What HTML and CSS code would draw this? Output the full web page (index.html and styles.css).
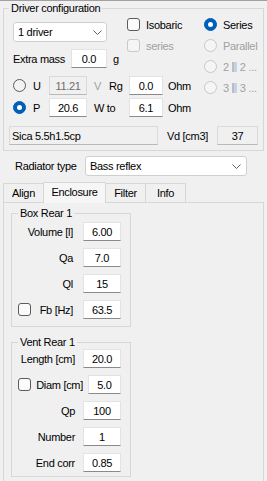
FILE: index.html
```html
<!DOCTYPE html>
<html lang="en">
    <head>
        <meta charset="UTF-8" />
        <meta name="viewport" content="width=device-width, initial-scale=1.0" />
        <title>Driver</title>
        <link rel="stylesheet" href="styles.css">
    </head>
    <body>
        <fieldset class="group driver">
            <legend>Driver configuration</legend>
            <div class="cfg">
                <div class="main">
                    <div class="row1">
                        <div class="left-col">
                            <div class="select drivers">
                                <span>1 driver</span>
                                <svg width="9" height="5" viewBox="0 0 9 5"><path d="M0.5 0.5L4.5 4.5L8.5 0.5" fill="none" stroke="#606060"/></svg>
                            </div>
                            <div class="mass">
                                <span class="mass-label">Extra mass</span>
                                <div class="box mass-box">0.0</div>
                                <span class="unit">g</span>
                            </div>
                        </div>
                        <div class="checks">
                            <div class="check"><span class="cb"></span>Isobaric</div>
                            <div class="check disabled"><span class="cb"></span>series</div>
                        </div>
                    </div>
                    <div class="power">
                        <span class="rb"></span>
                        <span>U</span>
                        <div class="box readonly">11.21</div>
                        <span class="mid"><span class="volt">V</span>Rg</span>
                        <div class="box box-sm">0.0</div>
                        <span class="ohm">Ohm</span>

                        <span class="rb on"></span>
                        <span>P</span>
                        <div class="box">20.6</div>
                        <span class="mid">W to</span>
                        <div class="box box-sm">6.1</div>
                        <span class="ohm">Ohm</span>
                    </div>
                </div>
                <div class="radios">
                    <div class="option"><span class="rb on"></span><span>Series</span></div>
                    <div class="option disabled"><span class="rb"></span><span>Parallel</span></div>
                    <div class="option disabled"><span class="rb"></span><span class="combo">2<svg class="par" width="5" height="10" viewBox="0 0 5 10"><rect x="0" y="0" width="2" height="10" fill="#bdbdbd"/><rect x="2" y="0" width="3" height="10" fill="#c3d2ea"/></svg>2 ...</span></div>
                    <div class="option disabled"><span class="rb"></span><span class="combo">3<svg class="par" width="5" height="10" viewBox="0 0 5 10"><rect x="0" y="0" width="2" height="10" fill="#bdbdbd"/><rect x="2" y="0" width="3" height="10" fill="#c3d2ea"/></svg>3 ...</span></div>
                </div>
            </div>
            <div class="sica">
                <div class="box readonly name">Sica 5.5h1.5cp</div>
                <span class="vd">Vd [cm3]</span>
                <div class="box readonly vd-box">37</div>
            </div>
        </fieldset>

        <div class="radiator">
            <span class="radiator-label">Radiator type</span>
            <div class="select bass">
                <span>Bass reflex</span>
                <svg width="9" height="5" viewBox="0 0 9 5"><path d="M0.5 0.5L4.5 4.5L8.5 0.5" fill="none" stroke="#606060"/></svg>
            </div>
        </div>

        <div class="tabs">
            <div class="tab">Align</div>
            <div class="tab active">Enclosure</div>
            <div class="tab">Filter</div>
            <div class="tab">Info</div>
        </div>

        <div class="panel">
            <fieldset class="group box-rear">
                <legend>Box Rear 1</legend>
                <div class="fields">
                    <div class="field"><span class="lbl">Volume [l]</span><div class="box">6.00</div></div>
                    <div class="field"><span class="lbl">Qa</span><div class="box">7.0</div></div>
                    <div class="field"><span class="lbl">Ql</span><div class="box">15</div></div>
                    <div class="field"><span class="lbl"><span class="cb"></span>Fb [Hz]</span><div class="box">63.5</div></div>
                </div>
            </fieldset>

            <fieldset class="group vent">
                <legend>Vent Rear 1</legend>
                <div class="fields">
                    <div class="field"><span class="lbl">Length [cm]</span><div class="box">20.0</div></div>
                    <div class="field diam"><span class="lbl"><span class="cb"></span>Diam [cm]</span><div class="box">5.0</div></div>
                    <div class="field"><span class="lbl">Qp</span><div class="box">100</div></div>
                    <div class="field"><span class="lbl">Number</span><div class="box">1</div></div>
                    <div class="field"><span class="lbl">End corr</span><div class="box">0.85</div></div>
                </div>
            </fieldset>
        </div>
    </body>
</html>
```

FILE: styles.css
```css
:root {
  --bg: #f0f0f0;
  --line: #d7d7d7;
  --muted: #a0a0a0;
  --accent: #005fb8;
  --font: 'Liberation Sans', Arial, sans-serif;
}

* {
  box-sizing: border-box;
  margin: 0;
  padding: 0;
}

body {
  background: var(--bg);
  font-family: var(--font);
  font-size: 11px;
  line-height: 14px;
  letter-spacing: -0.3px;
  color: #000;
  width: 267px;
  height: 481px;
  overflow: hidden;
  border-top: 1px solid #a0a0a0;
}

fieldset.group {
  border: 1px solid var(--line);
  min-width: 0;
}

legend {
  padding: 0 2px;
}

/* driver configuration */

.driver {
  margin: 0 3px;
  width: 261px;
  padding: 3px 5px 5px;
}

.cfg {
  display: flex;
}

.main {
  width: 195px;
  flex: none;
  padding-left: 4px;
}

.row1 {
  display: flex;
}

.left-col {
  width: 114px;
}

.select {
  display: flex;
  align-items: center;
  justify-content: space-between;
  height: 20px;
  background: #fff;
  border: 1px solid #cfcfcf;
  border-radius: 3px;
  padding: 0 4px;
}

.drivers {
  width: 94px;
  margin-top: 4px;
}

.mass {
  display: flex;
  align-items: center;
  height: 19px;
  margin-top: 7px;
}

.mass-label {
  width: 58px;
}

.box {
  display: flex;
  align-items: center;
  justify-content: center;
  width: 38px;
  height: 19px;
  background: #fff;
  border: 1px solid #e3e3e3;
  border-bottom-color: #8a8a8a;
}

.mass-box { width: 36px; }
.box-sm   { width: 34px; }

.readonly {
  background: var(--bg);
  border-color: #dadada;
  border-bottom-color: #b8b8b8;
  color: #6d6d6d;
}

.unit {
  margin-left: 6px;
}

.checks,
.radios {
  display: flex;
  flex-direction: column;
  gap: 8px;
}

.radios {
  flex: none;
  white-space: nowrap;
}

.check,
.option {
  display: flex;
  align-items: center;
  gap: 6px;
  height: 13px;
}

.cb {
  width: 13px;
  height: 13px;
  border: 1px solid #5b5b5b;
  border-radius: 3px;
  background: #fbfbfb;
  flex: none;
}

.rb {
  width: 13px;
  height: 13px;
  border: 1px solid #5b5b5b;
  border-radius: 50%;
  background: #f3f3f3;
  flex: none;
}

.rb.on {
  display: flex;
  align-items: center;
  justify-content: center;
  background: var(--accent);
  border-color: var(--accent);
}

.rb.on::after {
  content: "";
  width: 5px;
  height: 5px;
  border-radius: 50%;
  background: #fff;
}

.disabled { color: var(--muted); }
.disabled .cb,
.disabled .rb {
  border-color: #c8c8c8;
  background: #f5f5f5;
}

.combo {
  display: inline-flex;
  align-items: center;
}

.par {
  margin: 0 3px;
}

.power {
  display: grid;
  grid-template-columns: 20px 16px 38px 42px 34px auto;
  grid-auto-rows: 19px;
  row-gap: 3px;
  align-items: center;
  margin-top: 8px;
}

.mid  { padding-left: 7px; }
.ohm  { padding-left: 5px; }

.volt {
  display: inline-block;
  width: 15px;
  color: var(--muted);
}

.sica {
  display: flex;
  align-items: center;
  height: 19px;
  margin-top: 9px;
}

.name {
  width: 149px;
  justify-content: flex-start;
  padding-left: 2px;
  color: #000;
}

.vd {
  margin-left: 9px;
}

.vd-box {
  width: 41px;
  margin-left: auto;
  color: #000;
}

/* radiator + tabs */

.radiator {
  display: flex;
  align-items: center;
  height: 20px;
  margin-top: 5px;
  padding-left: 15px;
}

.radiator-label {
  width: 70px;
}

.bass {
  width: 162px;
  padding-right: 5px;
}

.tabs {
  display: flex;
  align-items: flex-end;
  height: 20px;
  margin: 6px 0 0 3px;
}

.tab {
  display: flex;
  align-items: center;
  justify-content: center;
  width: 41px;
  height: 19px;
  margin-left: -1px;
  border: 1px solid var(--line);
  border-bottom: none;
}

.tab:first-child { margin-left: 0; }

.tab.active {
  position: relative;
  z-index: 1;
  width: 63px;
  height: 21px;
  margin-bottom: -1px;
  align-items: flex-start;
  padding-top: 2px;
  background: #f6f6f6;
}

.panel {
  margin: 0 3px;
  height: 279px;
  border: 1px solid var(--line);
  border-bottom: none;
  padding: 3px 0 0 7px;
}

.box-rear,
.vent {
  width: 120px;
}

.box-rear { padding: 2px 0 7px 6px; }
.vent     { padding: 0 0 4px 6px; margin-top: 8px; }

.fields {
  display: flex;
  flex-direction: column;
  gap: 7px;
}

.field {
  display: flex;
  align-items: center;
  height: 19px;
}

.lbl {
  display: flex;
  align-items: center;
  justify-content: flex-end;
}

.lbl .cb { margin-right: auto; }

.box-rear .lbl { width: 55px; margin-right: 10px; }
.vent .lbl     { width: 57px; margin-right: 8px; }
.vent .diam .lbl { width: 65px; margin-right: 5px; }
.vent .diam .box { width: 33px; }
```
